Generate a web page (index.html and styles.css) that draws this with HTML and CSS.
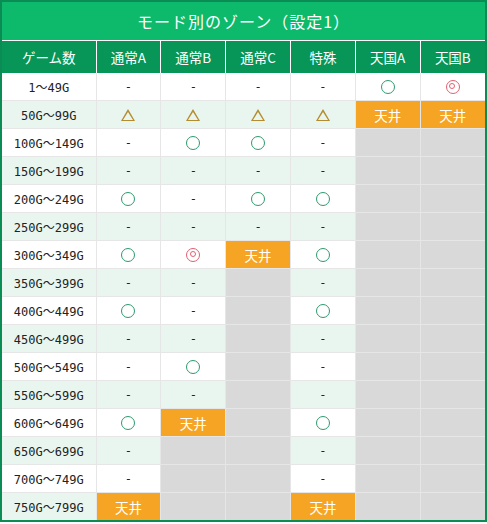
FILE: index.html
```html
<!DOCTYPE html>
<html lang="ja">
<head>
    <meta charset="UTF-8">
    <title>モード別のゾーン（設定1）</title>
    <link rel="stylesheet" href="styles.css">
</head>
<body>
    <div class="zone">
        <div class="zone-title">モード別のゾーン（設定1）</div>
        <table class="zone-table">
            <colgroup>
                <col class="c-game">
                <col><col><col><col><col><col>
            </colgroup>
            <thead>
                <tr>
                    <th>ゲーム数</th><th>通常A</th><th>通常B</th><th>通常C</th><th>特殊</th><th>天国A</th><th>天国B</th>
                </tr>
            </thead>
            <tbody>
                <tr><td>1～49G</td><td>-</td><td>-</td><td>-</td><td>-</td><td><i class="mk ok"></i></td><td><i class="mk best"></i></td></tr>
                <tr><td>50G～99G</td><td><i class="mk tri"></i></td><td><i class="mk tri"></i></td><td><i class="mk tri"></i></td><td><i class="mk tri"></i></td><td class="ceil">天井</td><td class="ceil">天井</td></tr>
                <tr><td>100G～149G</td><td>-</td><td><i class="mk ok"></i></td><td><i class="mk ok"></i></td><td>-</td><td class="na"></td><td class="na"></td></tr>
                <tr><td>150G～199G</td><td>-</td><td>-</td><td>-</td><td>-</td><td class="na"></td><td class="na"></td></tr>
                <tr><td>200G～249G</td><td><i class="mk ok"></i></td><td>-</td><td><i class="mk ok"></i></td><td><i class="mk ok"></i></td><td class="na"></td><td class="na"></td></tr>
                <tr><td>250G～299G</td><td>-</td><td>-</td><td>-</td><td>-</td><td class="na"></td><td class="na"></td></tr>
                <tr><td>300G～349G</td><td><i class="mk ok"></i></td><td><i class="mk best"></i></td><td class="ceil">天井</td><td><i class="mk ok"></i></td><td class="na"></td><td class="na"></td></tr>
                <tr><td>350G～399G</td><td>-</td><td>-</td><td class="na"></td><td>-</td><td class="na"></td><td class="na"></td></tr>
                <tr><td>400G～449G</td><td><i class="mk ok"></i></td><td>-</td><td class="na"></td><td><i class="mk ok"></i></td><td class="na"></td><td class="na"></td></tr>
                <tr><td>450G～499G</td><td>-</td><td>-</td><td class="na"></td><td>-</td><td class="na"></td><td class="na"></td></tr>
                <tr><td>500G～549G</td><td>-</td><td><i class="mk ok"></i></td><td class="na"></td><td>-</td><td class="na"></td><td class="na"></td></tr>
                <tr><td>550G～599G</td><td>-</td><td>-</td><td class="na"></td><td>-</td><td class="na"></td><td class="na"></td></tr>
                <tr><td>600G～649G</td><td><i class="mk ok"></i></td><td class="ceil">天井</td><td class="na"></td><td><i class="mk ok"></i></td><td class="na"></td><td class="na"></td></tr>
                <tr><td>650G～699G</td><td>-</td><td class="na"></td><td class="na"></td><td>-</td><td class="na"></td><td class="na"></td></tr>
                <tr><td>700G～749G</td><td>-</td><td class="na"></td><td class="na"></td><td>-</td><td class="na"></td><td class="na"></td></tr>
                <tr><td>750G～799G</td><td class="ceil">天井</td><td class="na"></td><td class="na"></td><td class="ceil">天井</td><td class="na"></td><td class="na"></td></tr>
            </tbody>
        </table>
    </div>
</body>
</html>
```

FILE: styles.css
```css
body {
    margin: 0;
    font-family: "DejaVu Sans Mono", "Noto Sans CJK JP", monospace;
    color: #222;
}

.zone {
    width: 487px;
    box-sizing: border-box;
    border: 2px solid #0b8c55;
    background: #fff;
}

.zone-title {
    height: 38px;
    line-height: 38px;
    background-color: #0dba6b;
    color: #fff;
    text-align: center;
    font-family: "Noto Sans CJK JP", sans-serif;
    font-size: 16px;
    letter-spacing: 1px;
    border-bottom: 1px solid #fff;
}

/* Table */
.zone-table {
    width: 100%;
    border-collapse: collapse;
    table-layout: fixed;
}

.c-game {
    width: 94px;
}

.zone-table th {
    height: 32px;
    padding: 0;
    background-color: #079658;
    color: #fff;
    font-family: "Noto Sans CJK JP", sans-serif;
    font-weight: normal;
    font-size: 13.5px;
    border-left: 1px solid #fff;
}

.zone-table th:first-child {
    border-left: none;
}

.zone-table td {
    height: 27px;
    padding: 0;
    text-align: center;
    font-size: 12px;
    border: 1px solid #e6e6e6;
}

.zone-table tr td:first-child {
    border-left: none;
}

.zone-table tr td:last-child {
    border-right: none;
}

.zone-table tbody tr:first-child td {
    border-top: none;
}

.zone-table tbody tr:last-child td {
    border-bottom: none;
}

/* Striped rows */
.zone-table tbody tr:nth-child(even) {
    background-color: #e9f6ef;
}

.zone-table td.ceil {
    background-color: #f5a523;
    color: #fff;
    font-family: "Noto Sans CJK JP", sans-serif;
    font-size: 13.5px;
}

.zone-table td.na {
    background-color: #d9d9d9;
}

/* Marks */
.mk {
    display: inline-block;
    vertical-align: middle;
    box-sizing: border-box;
}

.mk.ok {
    width: 14px;
    height: 14px;
    border: 1.5px solid #2e9a6e;
    border-radius: 50%;
}

.mk.best {
    width: 14px;
    height: 14px;
    border: 1.5px solid #e2606f;
    border-radius: 50%;
    position: relative;
}

.mk.best::after {
    content: "";
    position: absolute;
    left: 2.5px;
    top: 2.5px;
    width: 6px;
    height: 6px;
    box-sizing: border-box;
    border: 1.5px solid #e2606f;
    border-radius: 50%;
}

.mk.tri {
    width: 0;
    height: 0;
    position: relative;
    border-left: 7px solid transparent;
    border-right: 7px solid transparent;
    border-bottom: 12px solid #b48b2e;
}

.mk.tri::after {
    content: "";
    position: absolute;
    left: -5px;
    top: 3px;
    border-left: 5px solid transparent;
    border-right: 5px solid transparent;
    border-bottom: 8px solid #e9f6ef;
}
```
